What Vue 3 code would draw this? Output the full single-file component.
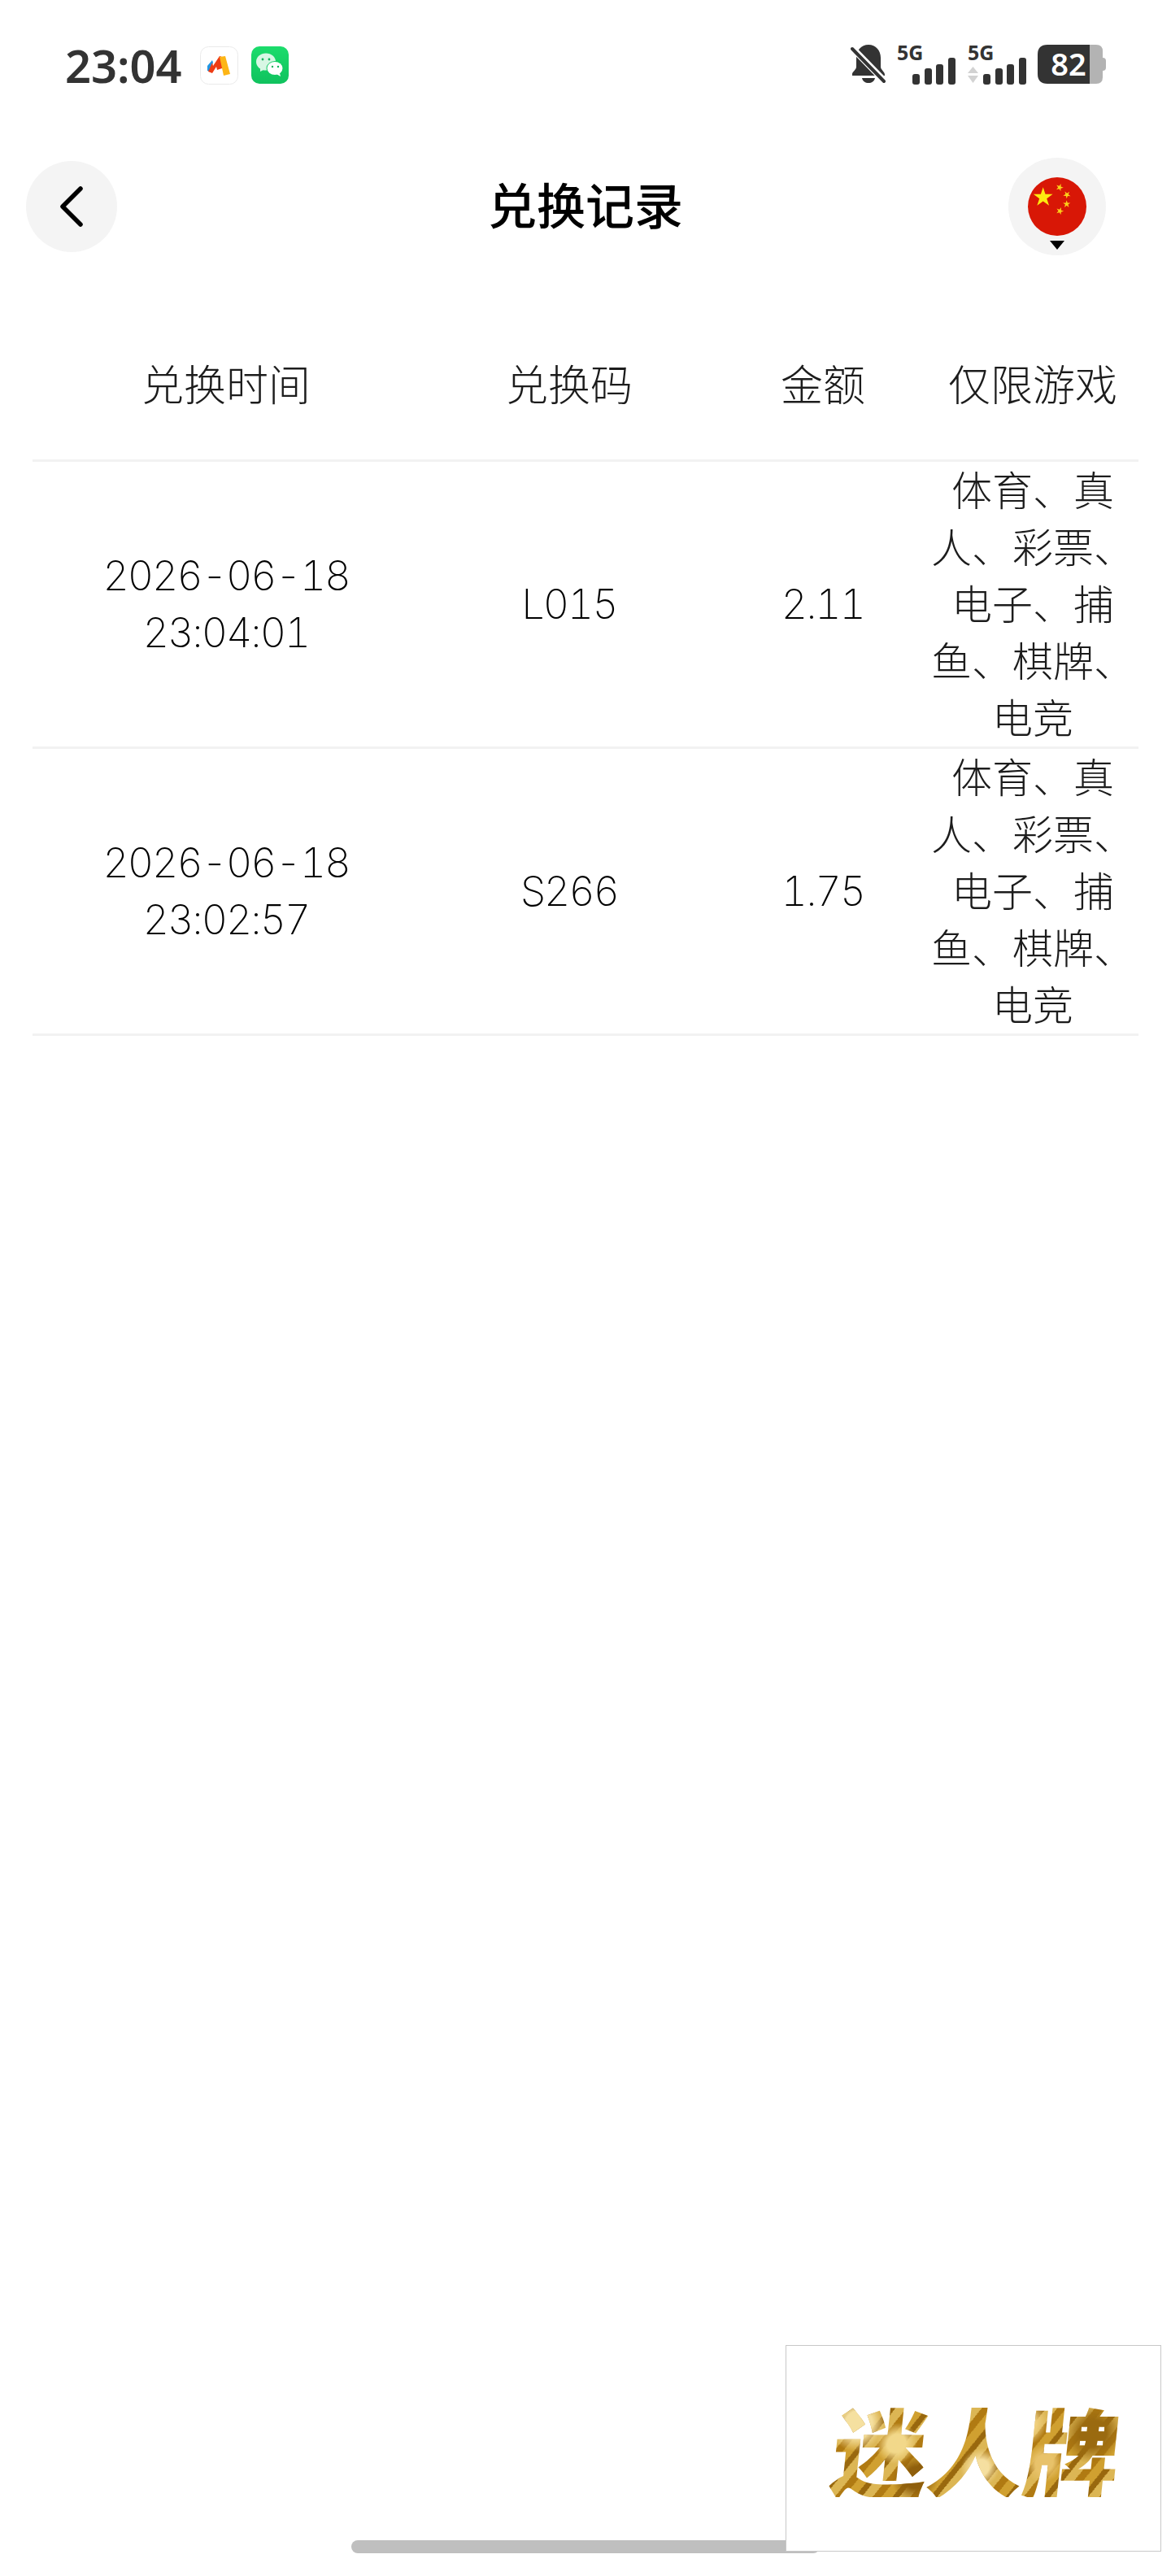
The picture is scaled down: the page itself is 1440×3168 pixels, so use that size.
<script setup>
const cjk = ['体育、真', '人、彩票、', '电子、捕', '鱼、棋牌、', '电竞']
const rows = [
  { date: '2026-06-18', time: '23:04:01', code: 'L015', amount: '2.11', games: cjk },
  { date: '2026-06-18', time: '23:02:57', code: 'S266', amount: '1.75', games: cjk },
]
function star(cx, cy, r, rot = 0) {
  const pts = []
  for (let i = 0; i < 10; i++) {
    const rad = i % 2 ? r * 0.382 : r
    const a = ((-90 + rot + i * 36) * Math.PI) / 180
    pts.push((cx + rad * Math.cos(a)).toFixed(2) + ',' + (cy + rad * Math.sin(a)).toFixed(2))
  }
  return pts.join(' ')
}
const stars = [
  star(39, 12.5, 4.8, 20),
  star(48, 21.5, 4.8, 40),
  star(47.7, 33, 4.8, 0),
  star(39.3, 41.5, 4.8, 20),
]
</script>

<template>
  <div class="page">
    <div class="status">
      <div class="status-left">
        <span class="clock">23:04</span>
        <svg class="app-icon" viewBox="0 0 47 47">
          <rect x="0.5" y="0.5" width="46" height="46" rx="10" fill="#fff" stroke="#eaeaea" />
          <path d="M9 24 L15 17 L16 20 L12 31 L9 30 Z" fill="#2196e3" />
          <path d="M10 31 L15 33 L20 25 L21 29 L27 27 L27 13 L24 12 L16 24 L15 20 Z" fill="#ee3c14" />
          <path d="M24 13 L31 12 L37 34 L29 36 Z" fill="#fdb515" />
        </svg>
        <svg class="wechat" viewBox="0 0 46 46">
          <defs>
            <linearGradient id="wg" x1="0" y1="0" x2="0" y2="1">
              <stop offset="0" stop-color="#1cdc6c" />
              <stop offset="1" stop-color="#10c25e" />
            </linearGradient>
          </defs>
          <rect width="46" height="46" rx="10" fill="url(#wg)" />
          <ellipse cx="18" cy="19" rx="12" ry="10.5" fill="#d8f7e4" />
          <path d="M11 26 L11 31 L17 28 Z" fill="#d8f7e4" />
          <ellipse cx="29" cy="27" rx="10.500" ry="9" fill="#14c963" />
          <ellipse cx="29" cy="27" rx="9.500" ry="8" fill="#fff" />
          <path d="M35 33 L36 37 L31 34 Z" fill="#fff" />
          <circle cx="14" cy="16" r="1.400" fill="#13b45a" />
          <circle cx="22" cy="16" r="1.400" fill="#13b45a" />
          <circle cx="26" cy="25" r="1.200" fill="#13b45a" />
          <circle cx="33" cy="25" r="1.200" fill="#13b45a" />
        </svg>
      </div>
      <div class="status-right">
        <svg class="bell" viewBox="0 0 44 48">
          <path d="M22 0 C31 0 37 7 37 16 L37 27 C37 31 42 33 42 37 L42 38 L2 38 L2 36 C2 33 7 31 7 27 L7 16 C7 7 13 0 22 0 Z" fill="#333" />
          <path d="M14 41 L30 41 C29 45 26 47 22 47 C18 47 15 45 14 41 Z" fill="#333" />
          <path d="M4 6 L41 44" stroke="#fff" stroke-width="8" />
          <path d="M2 5 L41 45" stroke="#333" stroke-width="4" stroke-linecap="round" />
        </svg>
        <svg class="signal" viewBox="1 0 72 50">
          <text x="0" y="19" class="five-g">5G</text>
          <rect x="19" y="36" width="9" height="13" rx="3" fill="#333" />
          <rect x="34" y="29" width="9" height="20" rx="3" fill="#333" />
          <rect x="48" y="24" width="9" height="25" rx="3" fill="#333" />
          <rect x="63" y="16" width="9" height="33" rx="3" fill="#333" />
        </svg>
        <svg class="signal" viewBox="0 0 72 50">
          <text x="0" y="19" class="five-g">5G</text>
          <path d="M6.500 27 L13 35 L0 35 Z" fill="#d2d2d2" />
          <path d="M0 38 L13 38 L6.500 47 Z" fill="#d2d2d2" />
          <rect x="19" y="36" width="9" height="13" rx="3" fill="#333" />
          <rect x="34" y="29" width="9" height="20" rx="3" fill="#333" />
          <rect x="48" y="24" width="9" height="25" rx="3" fill="#333" />
          <rect x="63" y="16" width="9" height="33" rx="3" fill="#333" />
        </svg>
        <svg class="battery" viewBox="0 0 84 48">
          <path d="M64 0 L72 0 Q80 0 80 8 L80 40 Q80 48 72 48 L64 48 Z" fill="#b3b3b3" />
          <path d="M80 16 Q84 16 84 20 L84 28 Q84 32 80 32 Z" fill="#b3b3b3" />
          <path d="M12 0 L64 0 L64 48 L12 48 Q0 48 0 36 L0 12 Q0 0 12 0 Z" fill="#333" />
          <text x="38" y="38" text-anchor="middle" class="level">82</text>
        </svg>
      </div>
    </div>

    <div class="nav">
      <button class="back" type="button" aria-label="back">
        <svg class="chevron" viewBox="0 0 30 50">
          <path d="M26 3 L4 25 L26 47" fill="none" stroke="#000" stroke-width="5.500" stroke-linecap="round" stroke-linejoin="round" />
        </svg>
      </button>
      <h1 class="title">兑换记录</h1>
      <button class="lang" type="button" aria-label="language">
        <svg class="flag" viewBox="0 0 72 72">
          <circle cx="36" cy="36" r="36" fill="#d81706" />
          <polygon :points="star(18.7, 24.7, 12.500)" fill="#fde910" />
          <polygon v-for="(s, i) in stars" :key="i" :points="s" fill="#fbd21a" />
        </svg>
        <span class="caret"></span>
      </button>
    </div>

    <div class="table">
      <div class="row head">
        <div>兑换时间</div>
        <div>兑换码</div>
        <div>金额</div>
        <div>仅限游戏</div>
      </div>
      <div v-for="r in rows" :key="r.code" class="row">
        <div class="cell num"><span>{{ r.date }}</span><span>{{ r.time }}</span></div>
        <div class="cell num">{{ r.code }}</div>
        <div class="cell num">{{ r.amount }}</div>
        <div class="cell games"><span v-for="g in r.games" :key="g">{{ g }}</span></div>
      </div>
    </div>

    <div class="home-bar"></div>
    <div class="logo"><span class="logo-text">迷人牌</span></div>
  </div>
</template>

<style scoped>
.page {
  position: relative;
  width: 1440px;
  height: 3168px;
  overflow: hidden;
  background: #fff;
  color: #000;
  font-family: Inter, "Noto Sans CJK SC", sans-serif;
}
.status {
  display: flex;
  justify-content: space-between;
  align-items: center;
  height: 48px;
  padding: 56px 80px 0 80px;
}
.status-left {
  display: flex;
  align-items: center;
}
.clock {
  width: 166px;
  font-family: "Noto Sans", sans-serif;
  font-size: 56px;
  font-weight: 600;
  line-height: 48px;
  color: #333;
}
.app-icon {
  width: 47px;
  height: 47px;
}
.wechat {
  width: 46px;
  height: 46px;
  margin-left: 16px;
}
.status-right {
  display: flex;
  align-items: flex-start;
  gap: 14px;
}
.bell {
  width: 44px;
  height: 48px;
}
.signal {
  width: 72px;
  height: 50px;
  overflow: visible;
}
.five-g {
  font-family: "Noto Sans", sans-serif;
  font-size: 25px;
  font-weight: 700;
  fill: #333;
}
.battery {
  width: 84px;
  height: 48px;
  overflow: visible;
}
.level {
  font-family: "Noto Sans", sans-serif;
  font-size: 38px;
  font-weight: 600;
  fill: #fff;
}
.nav {
  display: grid;
  grid-template-columns: 1fr auto 1fr;
  align-items: center;
  height: 120px;
  margin-top: 90px;
  padding: 0 80px;
}
.back,
.lang {
  border: 0;
  padding: 0;
  border-radius: 50%;
  background: #f4f4f4;
}
.back {
  display: flex;
  align-items: center;
  justify-content: center;
  width: 112px;
  height: 112px;
  margin-left: -48px;
  justify-self: start;
}
.chevron {
  width: 30px;
  height: 50px;
}
.title {
  margin: 0 0 8px;
  font-family: "Noto Sans CJK SC", sans-serif;
  font-size: 60px;
  font-weight: 500;
  line-height: 80px;
}
.lang {
  position: relative;
  width: 120px;
  height: 120px;
  justify-self: end;
}
.flag {
  position: absolute;
  top: 24px;
  left: 24px;
  width: 72px;
  height: 72px;
}
.caret {
  position: absolute;
  top: 102px;
  left: 51px;
  width: 0;
  height: 0;
  border-left: 9px solid transparent;
  border-right: 9px solid transparent;
  border-top: 11px solid #000;
}
.table {
  margin: 69px 40px 0;
}
.row {
  display: grid;
  grid-template-columns: 476px 368px 256px 260px;
  align-items: center;
  border-bottom: 3px solid #f2f2f2;
  font-size: 50px;
  font-weight: 300;
  line-height: 70px;
  text-align: center;
  color: #1c1c1c;
}
.head {
  height: 182px;
  align-items: start;
  font-size: 52px;
}
.head > div {
  margin-top: 57px;
}
.cell span {
  display: block;
}
.num {
  font-variant-numeric: tabular-nums;
  font-weight: 200;
  letter-spacing: -2px;
  color: #000;
}
.games {
  margin: -3px 0 3px;
  font-family: "Noto Sans CJK SC", sans-serif;
}
.home-bar {
  position: absolute;
  left: 432px;
  top: 3124px;
  width: 576px;
  height: 16px;
  border-radius: 8px;
  background: #bfbfbf;
}
.logo {
  position: absolute;
  left: 966px;
  top: 2884px;
  width: 460px;
  height: 252px;
  display: flex;
  align-items: center;
  justify-content: center;
  border: 1px solid #c8c8c8;
  background: #fff;
}
.logo-text {
  display: block;
  margin-left: 8px;
  font-family: "Noto Sans CJK SC", sans-serif;
  font-size: 118px;
  font-weight: 900;
  line-height: 120px;
  transform: skewX(-6deg);
  color: transparent;
  background:
    radial-gradient(circle at 8% 25%, #f5e0a0 0 5%, transparent 10%),
    radial-gradient(circle at 22% 45%, #f2d88a 0 4%, transparent 9%),
    radial-gradient(circle at 38% 30%, #f8e6b0 0 5%, transparent 11%),
    radial-gradient(circle at 52% 70%, #f5dfa0 0 5%, transparent 12%),
    radial-gradient(circle at 66% 25%, #f0d080 0 5%, transparent 11%),
    radial-gradient(circle at 74% 65%, #e8c26a 0 4%, transparent 9%),
    radial-gradient(circle at 90% 35%, #9a6a10 0 5%, transparent 11%),
    radial-gradient(circle at 30% 80%, #8f5f0c 0 5%, transparent 11%),
    repeating-linear-gradient(125deg, #b07a12 0 9px, #d0a030 9px 20px, #99680e 20px 27px, #dcb654 27px 38px);
  -webkit-background-clip: text;
  background-clip: text;
}
</style>
